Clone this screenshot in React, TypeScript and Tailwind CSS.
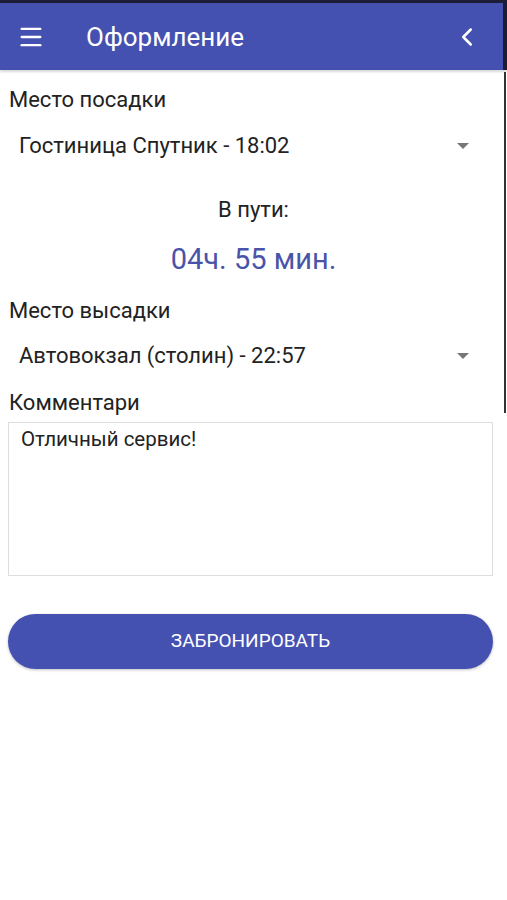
import { Menu, ChevronLeft } from 'lucide-react';

function Select({ value }: { value: string }) {
  return (
    <div className="flex h-[46px] items-center justify-between pl-[19px] pr-[38px]">
      <span className="text-[22px] leading-[26px] text-[#222]">{value}</span>
      <span className="h-0 w-0 border-x-[6px] border-t-[6px] border-x-transparent border-t-[#777]" />
    </div>
  );
}

export default function App() {
  return (
    <div className="relative h-[900px] w-[507px] overflow-hidden bg-white font-['Roboto',sans-serif]">
      <div className="h-[3px] bg-[#1b1d36]" />
      <header className="flex h-[67px] items-center bg-[#4551b1] pr-[4px] shadow-[0_2px_2px_rgba(0,0,0,0.15)]">
        <Menu className="ml-[17px] h-[28px] w-[28px] text-white" strokeWidth={2} />
        <h1 className="ml-[41px] text-[26px] leading-[30px] text-white">Оформление</h1>
        <ChevronLeft className="ml-auto mr-[21px] h-[30px] w-[30px] text-white" strokeWidth={2} />
      </header>
      <div className="absolute right-0 top-0 h-[70px] w-[4px] bg-[#1b1d36]" />
      <div className="absolute right-[1px] top-[72px] h-[341px] w-[2px] bg-[#333]" />

      <main className="px-[8px]">
        <p className="mt-[18px] pl-[1px] text-[22px] leading-[24px] text-[#222]">Место посадки</p>
        <div className="-mx-[8px] mt-[11px]">
          <Select value="Гостиница Спутник - 18:02" />
        </div>
        <p className="mt-[29px] text-center text-[22px] leading-[24px] text-[#222]">В пути:</p>
        <p className="mt-[20px] text-center text-[29px] leading-[34px] text-[#4954a9]">04ч. 55 мин.</p>

        <p className="mt-[23px] pl-[1px] text-[22px] leading-[24px] text-[#222]">Место высадки</p>
        <div className="-mx-[8px] mt-[10px]">
          <Select value="Автовокзал (столин) - 22:57" />
        </div>
        <p className="mt-[12px] pl-[1px] text-[22px] leading-[24px] text-[#222]">Комментари</p>
        <div className="mt-[7px] h-[154px] w-[485px] border border-[#ddd] px-[12px] pt-[3px] text-[20.5px] leading-[26px] text-[#222]">
          Отличный сервис!
        </div>

        <button className="mt-[38px] flex h-[55px] w-[485px] items-center justify-center rounded-full bg-[#4551b1] text-[19px] text-white shadow-[0_1px_3px_rgba(0,0,0,0.25)]">
          ЗАБРОНИРОВАТЬ
        </button>
      </main>
    </div>
  );
}
